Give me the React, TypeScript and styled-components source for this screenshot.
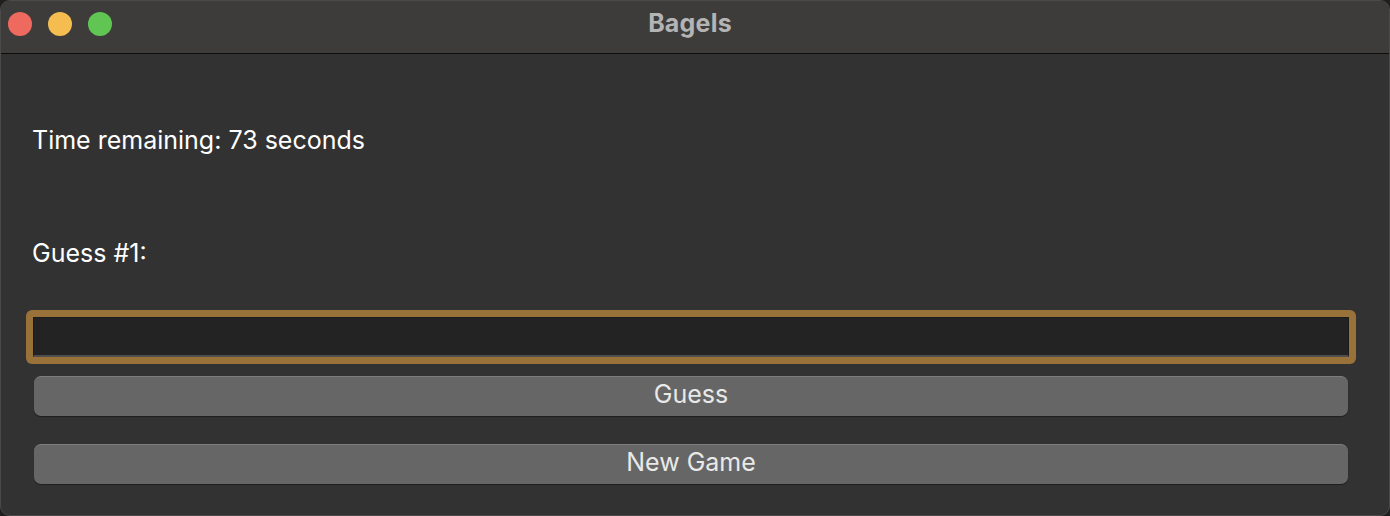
import React from "react";
import styled, { createGlobalStyle } from "styled-components";

const GlobalStyle = createGlobalStyle`
  html, body {
    margin: 0;
    padding: 0;
    background: #1f1f1f;
  }
  * { box-sizing: border-box; }
`;

const Window = styled.div`
  width: 1390px;
  height: 516px;
  display: flex;
  flex-direction: column;
  background: #323232;
  border-radius: 10px;
  border: 1px solid #4a4a4a;
  overflow: hidden;
  font-family: Inter, "Liberation Sans", "Noto Sans", sans-serif;
`;

const TitleBar = styled.div`
  height: 53px;
  flex: none;
  display: grid;
  grid-template-columns: 1fr auto 1fr;
  align-items: center;
  background: #3d3c3b;
  border-bottom: 1px solid #0e0e0e;
  padding: 0 17px 6px 7px;
`;

const Lights = styled.div`
  display: flex;
  gap: 16px;
`;

const Light = styled.span<{ $color: string }>`
  width: 24px;
  height: 24px;
  border-radius: 50%;
  background: ${(p) => p.$color};
`;

const Title = styled.div`
  font-size: 25px;
  font-weight: 700;
  color: #b4b4b4;
  letter-spacing: 0.2px;
  margin-bottom: 2px;
`;

const Content = styled.div`
  flex: 1;
  display: flex;
  flex-direction: column;
  padding: 71px 33px 0 25px;
`;

const Label = styled.div<{ $top: number }>`
  margin: ${(p) => p.$top}px 0 0 6px;
  height: 30px;
  line-height: 30px;
  font-size: 25px;
  color: #ffffff;
`;

const FocusRing = styled.div`
  margin-top: 42px;
  padding: 7px;
  background: #99723a;
  border-radius: 6px;
`;

const Field = styled.input`
  display: block;
  width: 100%;
  height: 40px;
  background: #232323;
  border: 1px solid #1b1b1b;
  border-bottom: 2px solid #4e4e4e;
  outline: none;
  color: #fff;
  font-size: 22px;
  font-family: inherit;
`;

const Button = styled.button<{ $top: number }>`
  margin: ${(p) => p.$top}px 8px 0 8px;
  height: 40px;
  border: none;
  border-top: 1px solid #7c7c7c;
  border-radius: 7px;
  background: #666666;
  box-shadow: 0 1px 1px rgba(0, 0, 0, 0.4);
  color: #e9e9e9;
  font-family: inherit;
  font-size: 25px;
  padding: 0 0 4px 0;
  line-height: 1;
`;

export default function App() {
  return (
    <>
      <GlobalStyle />
      <Window>
        <TitleBar>
          <Lights>
            <Light $color="#ee6a5f" />
            <Light $color="#f5bd4f" />
            <Light $color="#61c554" />
          </Lights>
          <Title>Bagels</Title>
          <div />
        </TitleBar>
        <Content>
          <Label $top={0}>Time remaining: 73 seconds</Label>
          <Label $top={83}>Guess #1:</Label>
          <FocusRing>
            <Field type="text" />
          </FocusRing>
          <Button $top={12}>Guess</Button>
          <Button $top={28}>New Game</Button>
        </Content>
      </Window>
    </>
  );
}
